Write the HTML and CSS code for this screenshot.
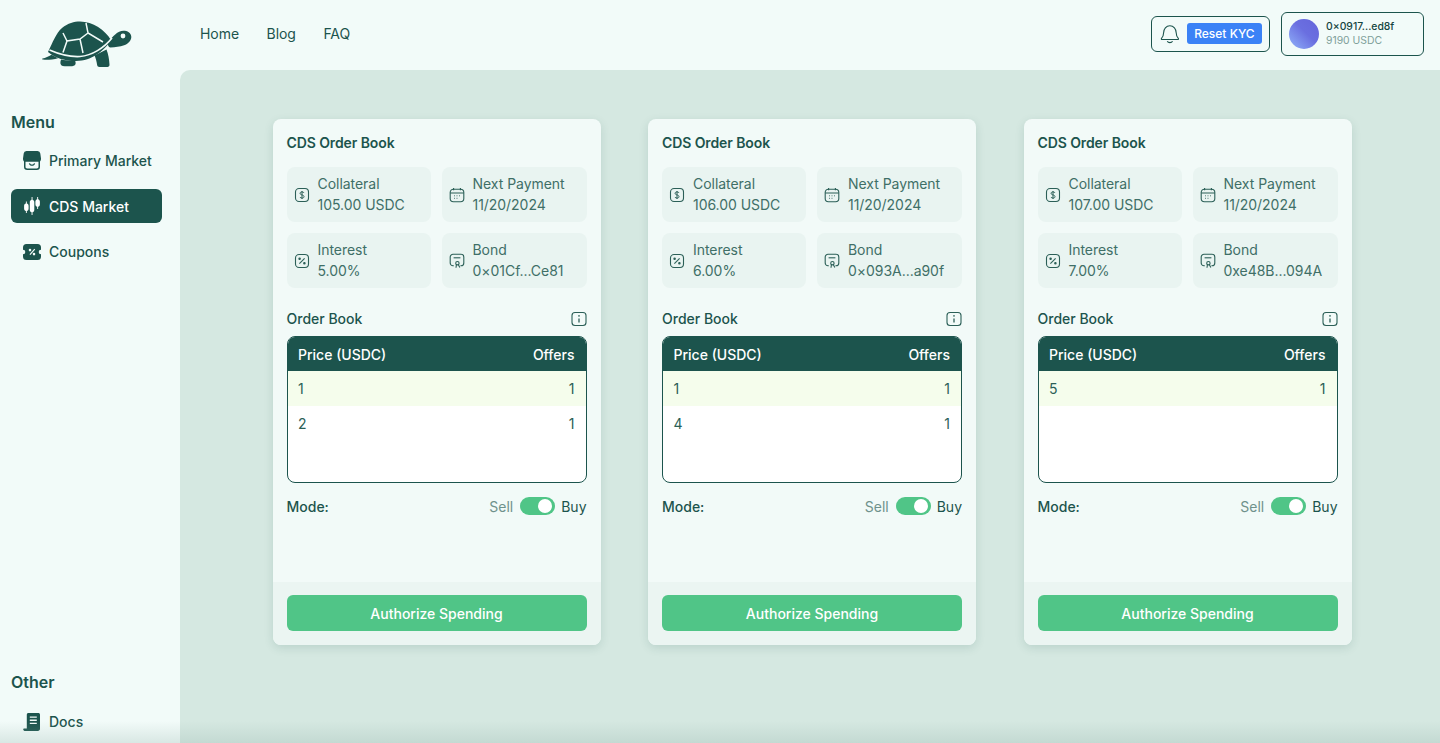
FILE: index.html
```html
<!DOCTYPE html>
<html lang="en">
<head>
  <meta charset="UTF-8">
  <meta name="viewport" content="width=device-width, initial-scale=1.0">
  <title>CDS Market</title>
  <link rel="stylesheet" href="styles.css">
</head>
<body>
  <svg class="sprite" xmlns="http://www.w3.org/2000/svg">
    <symbol id="i-dollar" viewBox="0 0 16 16" fill="none" stroke="currentColor" stroke-width="1.1">
      <rect x="1.5" y="1.5" width="13" height="13" rx="3.5"/>
      <path d="M10 5.9C9.7 5.2 9 4.9 8 4.900c-1.100 0-1.900.5-1.900 1.500S7 7.600 8 7.900s2 .7 2 1.700-.9 1.500-2 1.500c-1 0-1.800-.4-2-1.100M8 4v8" stroke-width="1"/>
    </symbol>
    <symbol id="i-cal" viewBox="0 0 16 16" fill="none" stroke="currentColor" stroke-width="1.1">
      <rect x="1.2" y="2.2" width="13.6" height="12.6" rx="3.2"/>
      <path d="M1.200 6h13.600M4.600.9v2.400M11.400.9v2.400"/>
      <path d="M5 8.800h.8M7.600 8.800h.8M10.200 8.800h.8M5 11.300h.8M7.600 11.300h.8" stroke-width="1"/>
    </symbol>
    <symbol id="i-percent" viewBox="0 0 16 16" fill="none" stroke="currentColor" stroke-width="1.1">
      <rect x="1.5" y="1.5" width="13" height="13" rx="3.5"/>
      <path d="M10.600 5.400l-5.200 5.200"/>
      <circle cx="5.6" cy="5.8" r=".7" fill="currentColor"/>
      <circle cx="10.4" cy="10.2" r=".7" fill="currentColor"/>
    </symbol>
    <symbol id="i-bond" viewBox="0 0 16 16" fill="none" stroke="currentColor" stroke-width="1.1">
      <path d="M4.800 12.800H4A2.800 2.800 0 0 1 1.200 10V4A2.800 2.800 0 0 1 4 1.200h8A2.800 2.800 0 0 1 14.800 4v6a2.800 2.800 0 0 1-2.800 2.800h-.6"/>
      <path d="M4.600 4.800h6.800"/>
      <circle cx="8.400" cy="10.200" r="1.700"/>
      <path d="M7.400 11.800L7 14.800M9.400 11.800l1.400 2.600"/>
    </symbol>
    <symbol id="i-info" viewBox="0 0 16 16" fill="none" stroke="currentColor" stroke-width="1.1">
      <rect x="1" y="1.500" width="14" height="13" rx="3"/>
      <path d="M8 7.400v4" stroke-width="1.3"/>
      <circle cx="8" cy="4.900" r=".8" fill="currentColor" stroke="none"/>
    </symbol>
  </svg>

  <div class="shell">
    <header class="topbar">
      <a class="logo" href="#">
        <svg viewBox="0 0 90 48" width="90" height="48" fill="#1c544d">
          <path d="M6 33C11 23 14 14 20 9 26 4 32 2.500 38 2.500c13 0 25 8.500 31 18.500-6 10-19 21-35 21-11 0-20-2.500-28-9z"/>
          <path d="M66 22.500c2.400-2.600 5.300-5.300 7.500-7.300 2.600-2.600 5.800-3.800 9.300-3.400 4.200.5 6.700 3.300 6.500 6.400-.2 3.500-3.200 6.600-7.200 8-4.200 1.500-8.800 1.800-13.600 2.300-2 .2-3.300-3.400-2.500-6z"/>
          <path d="M0.500 39.500c3-.5 6-2.100 9-3.800l6.500 3.500c-4.800 1.300-10.700 1.900-15 1.400-.9-.1-1.100-.9-.5-1.100z"/>
          <path d="M19 40.500c4 .9 9 1.100 14 .9.800 1.600 1 3.400-.1 4.700-.6.700-1.600 1.100-2.700 1.100h-7.500c-3 0-4.700-1.500-4.300-4.300z"/>
          <path d="M52.500 36.500l12-6c1.700 4.500 2.800 10 3 15.300 0 1.300-.7 2.200-2 2.200h-8c-1.400 0-2.200-.8-2.400-2.200-.5-3.500-1.400-6.800-2.600-9.300z"/>
          <g fill="none" stroke="#f2fbf9" stroke-width="1.500">
            <path d="M7.500 31C19 36 29 38 38 37.500 50 36.500 62 29 70 19" stroke-width="1.700"/>
            <path d="M44 4l2 10 15 9M46 14l-8 6-13 2-4 11.500M25 22l-4-8M38 20l3 14"/>
          </g>
          <circle cx="81" cy="17" r="2.400" fill="#f2fbf9"/>
        </svg>
      </a>
      <nav class="topnav">
        <a href="#">Home</a>
        <a href="#">Blog</a>
        <a href="#">FAQ</a>
      </nav>
      <div class="topright">
        <div class="kyc-box">
          <svg class="bell" viewBox="0 0 20 20" width="20" height="20" fill="none" stroke="#1c544d" stroke-width="1.100">
            <path d="M1.500 14.500c1.200-1.300 2.100-2.500 2.100-5.500C3.600 4.800 6.300 1.700 10 1.700s6.400 3.100 6.400 7.300c0 3 .9 4.200 2.100 5.500.4.500.1 1-.5 1H2c-.6 0-.9-.5-.5-1z"/>
            <path d="M7.300 17.300c.6 1 1.500 1.400 2.700 1.400s2.100-.4 2.700-1.400"/>
          </svg>
          <button class="kyc-btn">Reset KYC</button>
        </div>
        <div class="wallet">
          <span class="avatar"></span>
          <div class="wallet-text">
            <span class="wallet-addr">0×0917...ed8f</span>
            <span class="wallet-bal">9190 USDC</span>
          </div>
        </div>
      </div>
    </header>

    <div class="lower">
      <aside class="sidebar">
        <div class="side-group">
          <h3>Menu</h3>
          <a class="side-item" href="#">
            <svg viewBox="0 0 18 19" width="18" height="19" fill="#1c544d">
              <path d="M3.500 0h11A2.800 2.800 0 0 1 17.300 2.500L18 7.500c.1 1.200-.3 2.300-1 3H1c-.7-.7-1.100-1.800-1-3l.7-5A2.800 2.800 0 0 1 3.500 0z"/>
              <path fill-rule="evenodd" d="M1 9.500h16v6.300A3.200 3.200 0 0 1 13.800 19H4.200A3.200 3.200 0 0 1 1 15.800zM2.500 10.500v5.300c0 1 .7 1.700 1.700 1.700h9.600c1 0 1.700-.7 1.700-1.700v-5.300zM5.800 12.500c.5 1.600 1.700 2.300 3.200 2.300s2.700-.7 3.200-2.300l-1.200-.3c-.3.9-1 1.400-2 1.400s-1.700-.5-2-1.400z"/>
            </svg>
            Primary Market
          </a>
          <a class="side-item active" href="#">
            <svg viewBox="0 0 18 18" width="18" height="18" fill="#fff">
              <path d="M2.900 4.500h.9v2c1.100.3 1.800 1.200 1.800 2.500v2.400c0 1.300-.7 2.200-1.800 2.500v2h-.9v-2c-1.100-.3-1.800-1.200-1.800-2.500V9c0-1.300.7-2.200 1.800-2.500z"/>
              <path d="M8.600 0h.9v2.800c1.100.3 1.800 1.200 1.800 2.500v7.400c0 1.300-.7 2.200-1.800 2.500V18h-.9v-2.800c-1.100-.3-1.800-1.200-1.800-2.500V5.300c0-1.300.7-2.200 1.800-2.500z"/>
              <path d="M14.200 0h.9v2.200c1.100.3 1.800 1.200 1.800 2.500v2.600c0 1.300-.7 2.200-1.800 2.500V12h-.9V9.800c-1.100-.3-1.800-1.200-1.800-2.500V4.700c0-1.300.7-2.200 1.800-2.500z"/>
            </svg>
            CDS Market
          </a>
          <a class="side-item" href="#">
            <svg viewBox="0 0 18 18" width="18" height="18" fill="#1c544d">
              <path fill-rule="evenodd" d="M3.500 1h11A3.500 3.500 0 0 1 18 4.500v2.200a2.300 2.300 0 0 0 0 4.600v2.200a3.500 3.500 0 0 1-3.500 3.500h-11A3.500 3.500 0 0 1 0 13.500v-2.200a2.300 2.300 0 0 0 0-4.600V4.500A3.500 3.500 0 0 1 3.500 1zm7.800 4.800L6.500 11.200l.9.800 4.800-5.400zM7 5.800a1.300 1.300 0 1 0 0 2.600 1.300 1.300 0 0 0 0-2.600zm4 4a1.300 1.300 0 1 0 0 2.600 1.300 1.300 0 0 0 0-2.600z"/>
            </svg>
            Coupons
          </a>
        </div>
        <div class="side-group side-other">
          <h3>Other</h3>
          <a class="side-item" href="#">
            <svg viewBox="0 0 18 18" width="18" height="18" fill="#1c544d">
              <path fill-rule="evenodd" d="M5.500 0h9.800c1 0 1.700.7 1.700 1.700v14.100c0 1.300-.9 2.200-2.200 2.200H2.300C1.100 18 .2 17.400.2 16.500c0-.5.300-.9.800-.9h2.800V1.700C3.800.7 4.500 0 5.500 0zm1.300 3.400v1.300h7V3.400zm0 3.200v1.300h7V6.600zm0 3.200v1.300h7V9.800z"/>
            </svg>
            Docs
          </a>
        </div>
      </aside>

      <main class="content">
        <section class="card">
          <div class="card-body">
            <h2>CDS Order Book</h2>
            <div class="stats">
              <div class="stat"><svg class="ico"><use href="#i-dollar"/></svg><div>Collateral<br>105.00 USDC</div></div>
              <div class="stat"><svg class="ico"><use href="#i-cal"/></svg><div>Next Payment<br>11/20/2024</div></div>
              <div class="stat"><svg class="ico"><use href="#i-percent"/></svg><div>Interest<br>5.00%</div></div>
              <div class="stat"><svg class="ico"><use href="#i-bond"/></svg><div>Bond<br>0×01Cf...Ce81</div></div>
            </div>
            <div class="book-head"><span>Order Book</span><svg class="ico"><use href="#i-info"/></svg></div>
            <div class="book">
              <div class="book-row book-title"><span>Price (USDC)</span><span>Offers</span></div>
              <div class="book-row hl"><span>1</span><span>1</span></div>
              <div class="book-row"><span>2</span><span>1</span></div>
            </div>
            <div class="mode">
              <span class="mode-label">Mode:</span>
              <span class="sell">Sell</span><span class="toggle"></span><span class="buy">Buy</span>
            </div>
          </div>
          <div class="card-foot"><button class="action">Authorize Spending</button></div>
        </section>

        <section class="card">
          <div class="card-body">
            <h2>CDS Order Book</h2>
            <div class="stats">
              <div class="stat"><svg class="ico"><use href="#i-dollar"/></svg><div>Collateral<br>106.00 USDC</div></div>
              <div class="stat"><svg class="ico"><use href="#i-cal"/></svg><div>Next Payment<br>11/20/2024</div></div>
              <div class="stat"><svg class="ico"><use href="#i-percent"/></svg><div>Interest<br>6.00%</div></div>
              <div class="stat"><svg class="ico"><use href="#i-bond"/></svg><div>Bond<br>0×093A...a90f</div></div>
            </div>
            <div class="book-head"><span>Order Book</span><svg class="ico"><use href="#i-info"/></svg></div>
            <div class="book">
              <div class="book-row book-title"><span>Price (USDC)</span><span>Offers</span></div>
              <div class="book-row hl"><span>1</span><span>1</span></div>
              <div class="book-row"><span>4</span><span>1</span></div>
            </div>
            <div class="mode">
              <span class="mode-label">Mode:</span>
              <span class="sell">Sell</span><span class="toggle"></span><span class="buy">Buy</span>
            </div>
          </div>
          <div class="card-foot"><button class="action">Authorize Spending</button></div>
        </section>

        <section class="card">
          <div class="card-body">
            <h2>CDS Order Book</h2>
            <div class="stats">
              <div class="stat"><svg class="ico"><use href="#i-dollar"/></svg><div>Collateral<br>107.00 USDC</div></div>
              <div class="stat"><svg class="ico"><use href="#i-cal"/></svg><div>Next Payment<br>11/20/2024</div></div>
              <div class="stat"><svg class="ico"><use href="#i-percent"/></svg><div>Interest<br>7.00%</div></div>
              <div class="stat"><svg class="ico"><use href="#i-bond"/></svg><div>Bond<br>0xe48B...094A</div></div>
            </div>
            <div class="book-head"><span>Order Book</span><svg class="ico"><use href="#i-info"/></svg></div>
            <div class="book">
              <div class="book-row book-title"><span>Price (USDC)</span><span>Offers</span></div>
              <div class="book-row hl"><span>5</span><span>1</span></div>
            </div>
            <div class="mode">
              <span class="mode-label">Mode:</span>
              <span class="sell">Sell</span><span class="toggle"></span><span class="buy">Buy</span>
            </div>
          </div>
          <div class="card-foot"><button class="action">Authorize Spending</button></div>
        </section>
      </main>
    </div>
  </div>
</body>
</html>
```

FILE: styles.css
```css
* { box-sizing: border-box; }
html, body {
  margin: 0;
  height: 100%;
  overflow: hidden;
}
body {
  background: #f2fbf9;
  color: #1c544d;
  font-family: Inter, "Liberation Sans", sans-serif;
  font-size: 14px;
}
a { color: inherit; text-decoration: none; }
.sprite { display: none; }

.shell {
  position: relative;
  height: 743px;
  display: flex;
  flex-direction: column;
}
.shell::after {
  content: "";
  position: absolute;
  left: 0;
  right: 0;
  bottom: 0;
  height: 22px;
  background: linear-gradient(to bottom, rgba(150, 180, 172, 0), rgba(150, 180, 172, .28));
  pointer-events: none;
}

.topbar {
  height: 70px;
  flex: none;
  display: flex;
  align-items: center;
  padding: 0 16px 0 42px;
}
.logo {
  display: block;
  width: 90px;
  height: 48px;
  align-self: flex-start;
  margin-top: 19px;
}
.logo svg { display: block; }
.topnav {
  display: flex;
  gap: 27.500px;
  margin-left: 68px;
  margin-top: -3px;
  letter-spacing: -.05px;
}
.topright {
  margin-left: auto;
  display: flex;
  align-items: center;
  gap: 11px;
  margin-top: -3px;
}
.kyc-box {
  width: 119px;
  height: 36px;
  display: flex;
  align-items: center;
  gap: 7px;
  padding: 0 7px 0 8px;
  border: 1px solid #1c544d;
  border-radius: 6px;
}
.kyc-btn {
  width: 76px;
  height: 21px;
  padding: 0;
  border: none;
  border-radius: 3px;
  background: #3b82f6;
  color: #fff;
  font: 500 12px Inter, sans-serif;
}
.wallet {
  width: 143px;
  height: 44px;
  display: flex;
  align-items: center;
  gap: 7px;
  padding: 0 7px;
  border: 1px solid #1c544d;
  border-radius: 6px;
}
.avatar {
  width: 30px;
  height: 30px;
  border-radius: 50%;
  background: linear-gradient(45deg, #8aa6f5 10%, #6a6fe0 55%, #6565db);
}
.wallet-text {
  display: flex;
  flex-direction: column;
  font-size: 10.400px;
  line-height: 14px;
}
.wallet-addr { font-weight: 500; color: #14453f; }
.wallet-bal { color: #7f9f99; }

.lower {
  flex: 1;
  min-height: 0;
  display: flex;
}
.sidebar {
  width: 180px;
  flex: none;
  display: flex;
  flex-direction: column;
  justify-content: space-between;
  padding: 42px 18px 5px 11px;
}
.sidebar h3 {
  margin: 0 0 11px;
  font-size: 16px;
  line-height: 20px;
  font-weight: 600;
}
.side-other h3 { margin-bottom: 12px; }
.side-item {
  height: 34px;
  display: flex;
  align-items: center;
  gap: 8px;
  padding: 1px 0 0 12px;
  margin-bottom: 11.500px;
  border-radius: 6px;
  font-weight: 500;
}
.side-item.active {
  background: #1c544d;
  color: #fff;
}
.side-other .side-item { margin-bottom: 0; }

.content {
  flex: 1;
  display: grid;
  grid-template-columns: repeat(3, 328px);
  column-gap: 47.500px;
  align-items: start;
  padding: 49px 0 0 92.500px;
  background: #d5e8e1;
  border-top-left-radius: 10px;
}
.card {
  height: 526px;
  display: flex;
  flex-direction: column;
  background: #f2faf8;
  border-radius: 8px;
  box-shadow: 0 3px 10px rgba(28, 84, 77, .14);
  overflow: hidden;
}
.card-body {
  flex: 1;
  padding: 14px 14px 0;
}
.card h2 {
  margin: 0;
  font-size: 14px;
  line-height: 20px;
  font-weight: 600;
  letter-spacing: -.1px;
}
.stats {
  display: grid;
  grid-template-columns: 144px 145px;
  gap: 11px;
  margin-top: 14px;
}
.stat {
  height: 55px;
  display: flex;
  align-items: center;
  gap: 8px;
  padding-left: 7px;
  background: #e9f4f1;
  border-radius: 8px;
  line-height: 20.500px;
  color: #3f6f67;
  letter-spacing: -.04px;
}
.ico {
  width: 16px;
  height: 16px;
  flex: none;
  color: #2b5f57;
}
.book-head {
  display: flex;
  justify-content: space-between;
  align-items: center;
  margin-top: 20px;
  height: 20px;
  font-weight: 500;
}
.book-head .ico { margin-top: 1px; }
.book {
  height: 147px;
  margin-top: 8px;
  background: #fff;
  border: 1px solid #1c544d;
  border-radius: 8px;
  overflow: hidden;
}
.book-row {
  height: 35px;
  display: flex;
  justify-content: space-between;
  align-items: center;
  padding: 0 11px 0 10.500px;
  color: #2b5f57;
}
.book-title {
  height: 34px;
  background: #1c544d;
  color: #fff;
  font-weight: 500;
}
.book-row.hl { background: #f5fdec; }
.mode {
  display: flex;
  align-items: center;
  margin-top: 14px;
  height: 18px;
}
.mode-label { font-weight: 500; margin-right: auto; }
.sell { color: #6f928c; }
.toggle {
  position: relative;
  width: 35px;
  height: 18px;
  margin: 0 6px 0 7px;
  background: #50c587;
  border-radius: 9px;
}
.toggle::after {
  content: "";
  position: absolute;
  top: 2px;
  right: 3px;
  width: 14px;
  height: 14px;
  background: #fff;
  border-radius: 50%;
}
.card-foot {
  height: 63px;
  flex: none;
  padding: 13px 14px 0;
  background: #ebf5f2;
}
.action {
  width: 100%;
  height: 36px;
  border: none;
  border-radius: 6px;
  background: #50c587;
  color: #fff;
  font: 500 14px Inter, sans-serif;
}
```
